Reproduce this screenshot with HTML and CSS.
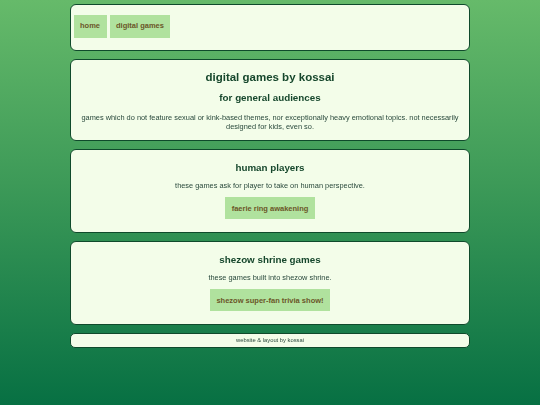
FILE: index.html
```html
<!DOCTYPE html>
<html>
<head>
<meta charset="utf-8">
<link rel="stylesheet" href="styles.css">
</head>
<body>
<div class="page">
  <nav class="box nav">
    <a class="btn" href="#">home</a>
    <a class="btn" href="#">digital games</a>
  </nav>
  <section class="box intro">
    <h1 class="title">digital games by kossai</h1>
    <h2 class="sub">for general audiences</h2>
    <p class="text">games which do not feature sexual or kink-based themes, nor exceptionally heavy emotional topics. not necessarily designed for kids, even so.</p>
  </section>
  <section class="box group">
    <h2 class="sub">human players</h2>
    <p class="text">these games ask for player to take on human perspective.</p>
    <a class="btn" href="#">faerie ring awakening</a>
  </section>
  <section class="box group">
    <h2 class="sub">shezow shrine games</h2>
    <p class="text">these games built into shezow shrine.</p>
    <a class="btn" href="#">shezow super-fan trivia show!</a>
  </section>
  <footer class="box foot"><span class="foot-text">website &amp; layout by kossai</span></footer>
</div>
</body>
</html>
```

FILE: styles.css
```css
html, body {
  margin: 0;
  padding: 0;
}
body {
  min-height: 405px;
  background: linear-gradient(to bottom, #66ba6a 0%, #3d9a58 45%, #077043 100%);
  font-family: "Liberation Sans", Arial, sans-serif;
  color: #1c4a30;
}
.page {
  width: 400px;
  margin: 0 auto;
  padding-top: 4px;
  display: flex;
  flex-direction: column;
  gap: 8px;
}
.box {
  box-sizing: border-box;
  background: #f3fde9;
  border: 1.5px solid #0f4a2b;
  border-radius: 6px;
}
.nav {
  display: flex;
  gap: 3px;
  padding: 9.5px 2.5px 12px;
  height: 47px;
}
.btn {
  display: inline-block;
  background: #b0e29e;
  color: #6b5628;
  font-weight: bold;
  font-size: 7.5px;
  line-height: 9px;
  padding: 6.5px 6.5px;
  text-decoration: none;
  white-space: nowrap;
}
.intro, .group {
  display: flex;
  flex-direction: column;
  align-items: center;
  text-align: center;
}
.intro {
  height: 82px;
  padding: 9.5px 8px 0;
}
.group {
  height: 84px;
  padding: 11.5px 10px 0;
}
.title {
  margin: 0;
  font-size: 11.5px;
  line-height: 14px;
  color: #16472c;
  transform: translateZ(0);
}
.sub {
  margin: 0;
  font-size: 9.8px;
  line-height: 12px;
  color: #16472c;
  transform: translateZ(0);
}
.intro .sub {
  margin-top: 8px;
}
.text {
  margin: 0;
  font-size: 7.4px;
  line-height: 9px;
  color: #27473a;
  transform: translateZ(0);
}
.intro .text {
  margin-top: 9px;
}
.group .text {
  margin-top: 7.5px;
  margin-bottom: 7px;
}
.foot {
  height: 15px;
  margin-top: -0.5px;
  font-size: 5.8px;
  line-height: 12px;
  text-align: center;
  color: #27473a;
  border-radius: 5px;
}
.foot-text {
  display: inline-block;
  transform: translateZ(0);
}
```
